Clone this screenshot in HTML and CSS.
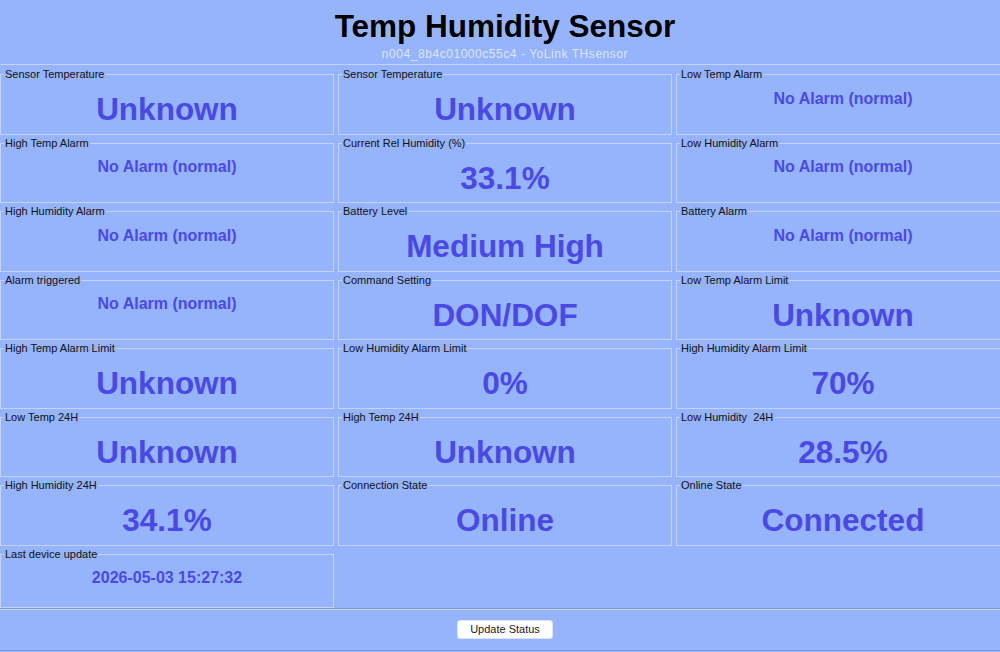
FILE: index.html
```html
<!DOCTYPE html>
<html>
<head>
<meta charset="utf-8">
<title>Temp Humidity Sensor</title>
<link rel="stylesheet" href="styles.css">
</head>
<body>
<div class="page">
  <header class="header">
    <div class="title">Temp Humidity Sensor</div>
    <div class="subtitle">n004_8b4c01000c55c4 - YoLink THsensor</div>
  </header>
  <main class="grid">
    <fieldset class="cell"><legend>Sensor Temperature</legend><div class="value big">Unknown</div></fieldset>
    <fieldset class="cell"><legend>Sensor Temperature</legend><div class="value big">Unknown</div></fieldset>
    <fieldset class="cell"><legend>Low Temp Alarm</legend><div class="value">No Alarm (normal)</div></fieldset>

    <fieldset class="cell"><legend>High Temp Alarm</legend><div class="value">No Alarm (normal)</div></fieldset>
    <fieldset class="cell"><legend>Current Rel Humidity (%)</legend><div class="value big">33.1%</div></fieldset>
    <fieldset class="cell"><legend>Low Humidity Alarm</legend><div class="value">No Alarm (normal)</div></fieldset>

    <fieldset class="cell"><legend>High Humidity Alarm</legend><div class="value">No Alarm (normal)</div></fieldset>
    <fieldset class="cell"><legend>Battery Level</legend><div class="value big">Medium High</div></fieldset>
    <fieldset class="cell"><legend>Battery Alarm</legend><div class="value">No Alarm (normal)</div></fieldset>

    <fieldset class="cell"><legend>Alarm triggered</legend><div class="value">No Alarm (normal)</div></fieldset>
    <fieldset class="cell"><legend>Command Setting</legend><div class="value big">DON/DOF</div></fieldset>
    <fieldset class="cell"><legend>Low Temp Alarm Limit</legend><div class="value big">Unknown</div></fieldset>

    <fieldset class="cell"><legend>High Temp Alarm Limit</legend><div class="value big">Unknown</div></fieldset>
    <fieldset class="cell"><legend>Low Humidity Alarm Limit</legend><div class="value big">0%</div></fieldset>
    <fieldset class="cell"><legend>High Humidity Alarm Limit</legend><div class="value big">70%</div></fieldset>

    <fieldset class="cell"><legend>Low Temp 24H</legend><div class="value big">Unknown</div></fieldset>
    <fieldset class="cell"><legend>High Temp 24H</legend><div class="value big">Unknown</div></fieldset>
    <fieldset class="cell"><legend>Low Humidity&nbsp; 24H</legend><div class="value big">28.5%</div></fieldset>

    <fieldset class="cell"><legend>High Humidity 24H</legend><div class="value big">34.1%</div></fieldset>
    <fieldset class="cell"><legend>Connection State</legend><div class="value big">Online</div></fieldset>
    <fieldset class="cell"><legend>Online State</legend><div class="value big">Connected</div></fieldset>

    <fieldset class="cell"><legend>Last device update</legend><div class="value">2026-05-03 15:27:32</div></fieldset>
  </main>
  <footer class="footer">
    <button class="btn" type="button">Update Status</button>
  </footer>
</div>
</body>
</html>
```

FILE: styles.css
```css
html, body {
  margin: 0;
  padding: 0;
  overflow: hidden;
  background: #95b4fc;
}

body {
  font-family: "Liberation Sans", Arial, sans-serif;
  color: #111;
  height: 652px;
}

.page {
  width: 1010px;
  background: #95b4fc;
}

.header {
  padding-top: 8px;
  padding-bottom: 2px;
  height: 54px;
  border-bottom: 1px solid #c4d3fb;
  text-align: center;
  box-sizing: content-box;
}

.title {
  font-size: 31.5px;
  line-height: 36px;
  font-weight: bold;
  color: #000;
}

.subtitle {
  margin-top: 3px;
  font-size: 12px;
  line-height: 15px;
  letter-spacing: 0.55px;
  color: #dde5fb;
}

.grid {
  display: grid;
  grid-template-columns: 334px 334px 334px;
  column-gap: 4px;
  row-gap: 2px;
  margin-top: 3px;
}

.cell {
  margin: 0;
  padding: 0;
  min-width: 0;
  border: 1px solid #c4d3fb;
}

.cell legend {
  margin-left: 3px;
  padding: 0 1px;
  font-size: 11px;
  line-height: 13px;
  color: #111;
}

.value {
  text-align: center;
  font-weight: bold;
  color: #4b49e6;
  font-size: 16px;
  line-height: 18px;
  padding: 8.5px 0 19.5px;
}

.value.big {
  font-size: 31.5px;
  line-height: 36px;
  padding: 10px 0 6.5px;
}

.footer {
  border-top: 1px solid #7d98d6;
  border-bottom: 1px solid #7d98d6;
  box-shadow: inset 0 1px 0 #c6d4fb;
  padding: 11px 0 11px;
  text-align: center;
}

.btn {
  display: inline-block;
  width: 96px;
  height: 19px;
  margin: 0;
  padding: 0;
  background: #fff;
  border: 1px solid #dfe4ef;
  border-radius: 3px;
  font-family: "Liberation Sans", Arial, sans-serif;
  font-size: 11px;
  line-height: 17px;
  color: #1b1b2b;
  vertical-align: top;
}
```
